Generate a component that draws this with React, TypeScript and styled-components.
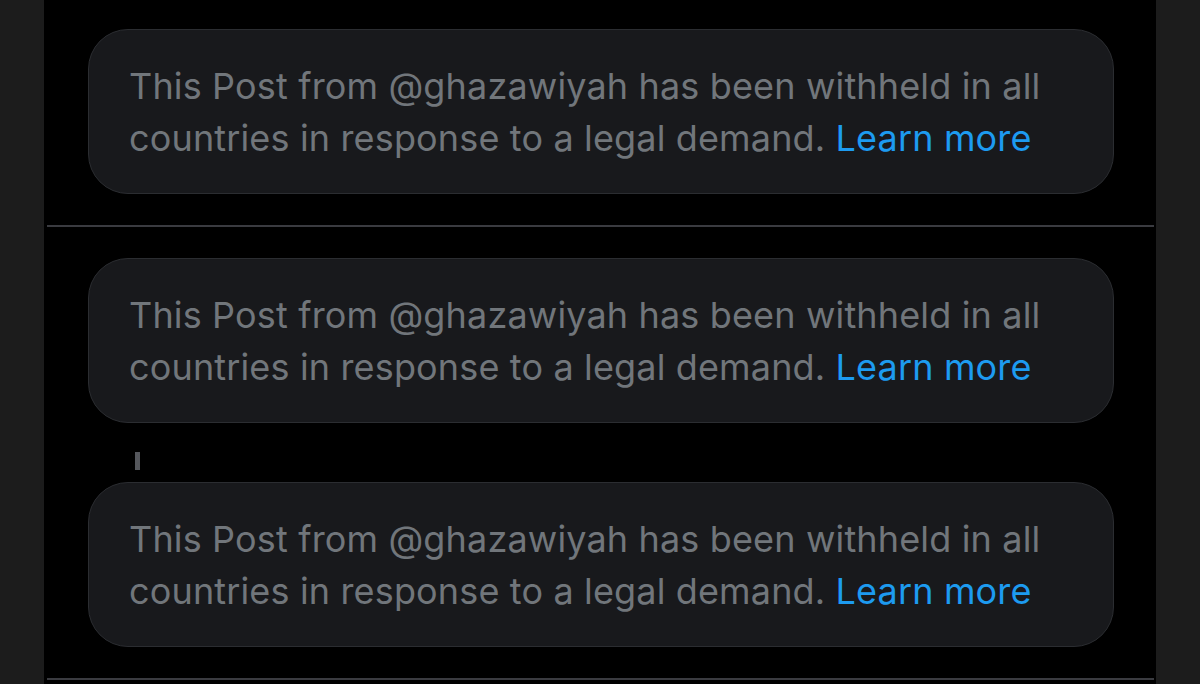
import styled, { createGlobalStyle } from 'styled-components';

const GlobalStyle = createGlobalStyle`
  html, body {
    margin: 0;
    padding: 0;
    background: #1c1c1c;
    height: 684px;
    overflow: hidden;
  }
`;

const Page = styled.div`
  display: flex;
  justify-content: center;
  height: 684px;
  background: #1c1c1c;
`;

const Timeline = styled.main`
  width: 1112px;
  background: #000;
  font-family: Inter, "Noto Sans", sans-serif;
`;

const Section = styled.section<{ $first?: boolean }>`
  margin: 0 2px 0 3px;
  padding: ${(p) => (p.$first ? '29px' : '31px')} 40px 31px 41px;
  border-bottom: 2px solid #3a3b40;
`;

const Card = styled.div`
  background: #18191c;
  border: 1px solid #2b2d31;
  border-radius: 40px;
  padding: 30px 30px 29px 40px;
`;

const Notice = styled.p`
  margin: 0;
  font-size: 36px;
  line-height: 52px;
  color: #71767b;
  letter-spacing: 0.15px;
`;

const LearnMore = styled.a`
  color: #1d9bf0;
  text-decoration: none;
`;

const ThreadLine = styled.div`
  width: 5px;
  height: 18px;
  background: #55575c;
  margin: 29px 0 12px 47px;
`;

const WithheldCard = ({ handle }: { handle: string }) => (
  <Card>
    <Notice>
      This Post from @{handle} has been withheld in all countries in response to a legal demand.{' '}
      <LearnMore href="#">Learn more</LearnMore>
    </Notice>
  </Card>
);

export default function App() {
  return (
    <>
      <GlobalStyle />
      <Page>
        <Timeline>
          <Section $first>
            <WithheldCard handle="ghazawiyah" />
          </Section>
          <Section>
            <WithheldCard handle="ghazawiyah" />
            <ThreadLine />
            <WithheldCard handle="ghazawiyah" />
          </Section>
        </Timeline>
      </Page>
    </>
  );
}
